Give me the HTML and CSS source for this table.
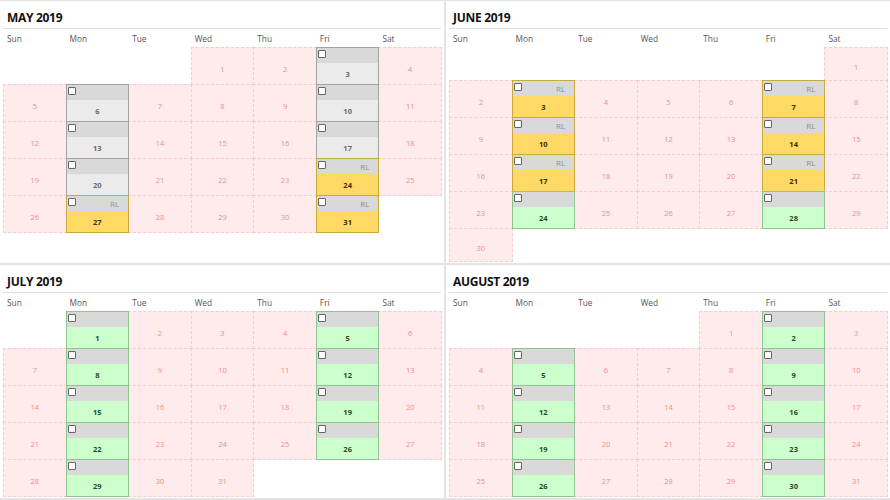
FILE: index.html
```html
<!DOCTYPE html>
<html>
<head>
<meta charset="utf-8">
<link rel="stylesheet" href="styles.css">
</head>
<body>
<div class="board">

<section class="month">
<h2 class="title">MAY 2019</h2>
<div class="days"><span>Sun</span><span>Mon</span><span>Tue</span><span>Wed</span><span>Thu</span><span>Fri</span><span>Sat</span></div>
<div class="grid">
<div class="e"></div><div class="e"></div><div class="e"></div><div class="p">1</div><div class="p">2</div>
<div class="c g"><div class="bar"><i class="cb"></i></div><div class="num">3</div></div><div class="p">4</div>
<div class="p">5</div><div class="c g"><div class="bar"><i class="cb"></i></div><div class="num">6</div></div><div class="p">7</div><div class="p">8</div><div class="p">9</div>
<div class="c g"><div class="bar"><i class="cb"></i></div><div class="num">10</div></div><div class="p">11</div>
<div class="p">12</div><div class="c g"><div class="bar"><i class="cb"></i></div><div class="num">13</div></div><div class="p">14</div><div class="p">15</div><div class="p">16</div>
<div class="c g"><div class="bar"><i class="cb"></i></div><div class="num">17</div></div><div class="p">18</div>
<div class="p">19</div><div class="c g"><div class="bar"><i class="cb"></i></div><div class="num">20</div></div><div class="p">21</div><div class="p">22</div><div class="p">23</div>
<div class="c y"><div class="bar"><i class="cb"></i><span class="rl">RL</span></div><div class="num">24</div></div><div class="p">25</div>
<div class="p">26</div><div class="c y"><div class="bar"><i class="cb"></i><span class="rl">RL</span></div><div class="num">27</div></div><div class="p">28</div><div class="p">29</div><div class="p">30</div>
<div class="c y"><div class="bar"><i class="cb"></i><span class="rl">RL</span></div><div class="num">31</div></div><div class="e"></div>
</div>
</section>

<section class="month">
<h2 class="title">JUNE 2019</h2>
<div class="days"><span>Sun</span><span>Mon</span><span>Tue</span><span>Wed</span><span>Thu</span><span>Fri</span><span>Sat</span></div>
<div class="grid">
<div class="e"></div><div class="e"></div><div class="e"></div><div class="e"></div><div class="e"></div><div class="e"></div><div class="p">1</div>
<div class="p">2</div><div class="c y"><div class="bar"><i class="cb"></i><span class="rl">RL</span></div><div class="num">3</div></div><div class="p">4</div><div class="p">5</div><div class="p">6</div>
<div class="c y"><div class="bar"><i class="cb"></i><span class="rl">RL</span></div><div class="num">7</div></div><div class="p">8</div>
<div class="p">9</div><div class="c y"><div class="bar"><i class="cb"></i><span class="rl">RL</span></div><div class="num">10</div></div><div class="p">11</div><div class="p">12</div><div class="p">13</div>
<div class="c y"><div class="bar"><i class="cb"></i><span class="rl">RL</span></div><div class="num">14</div></div><div class="p">15</div>
<div class="p">16</div><div class="c y"><div class="bar"><i class="cb"></i><span class="rl">RL</span></div><div class="num">17</div></div><div class="p">18</div><div class="p">19</div><div class="p">20</div>
<div class="c y"><div class="bar"><i class="cb"></i><span class="rl">RL</span></div><div class="num">21</div></div><div class="p">22</div>
<div class="p">23</div><div class="c n"><div class="bar"><i class="cb"></i></div><div class="num">24</div></div><div class="p">25</div><div class="p">26</div><div class="p">27</div>
<div class="c n"><div class="bar"><i class="cb"></i></div><div class="num">28</div></div><div class="p">29</div>
<div class="p">30</div>
</div>
</section>

<section class="month">
<h2 class="title">JULY 2019</h2>
<div class="days"><span>Sun</span><span>Mon</span><span>Tue</span><span>Wed</span><span>Thu</span><span>Fri</span><span>Sat</span></div>
<div class="grid">
<div class="e"></div><div class="c n"><div class="bar"><i class="cb"></i></div><div class="num">1</div></div><div class="p">2</div><div class="p">3</div><div class="p">4</div>
<div class="c n"><div class="bar"><i class="cb"></i></div><div class="num">5</div></div><div class="p">6</div>
<div class="p">7</div><div class="c n"><div class="bar"><i class="cb"></i></div><div class="num">8</div></div><div class="p">9</div><div class="p">10</div><div class="p">11</div>
<div class="c n"><div class="bar"><i class="cb"></i></div><div class="num">12</div></div><div class="p">13</div>
<div class="p">14</div><div class="c n"><div class="bar"><i class="cb"></i></div><div class="num">15</div></div><div class="p">16</div><div class="p">17</div><div class="p">18</div>
<div class="c n"><div class="bar"><i class="cb"></i></div><div class="num">19</div></div><div class="p">20</div>
<div class="p">21</div><div class="c n"><div class="bar"><i class="cb"></i></div><div class="num">22</div></div><div class="p">23</div><div class="p">24</div><div class="p">25</div>
<div class="c n"><div class="bar"><i class="cb"></i></div><div class="num">26</div></div><div class="p">27</div>
<div class="p">28</div><div class="c n"><div class="bar"><i class="cb"></i></div><div class="num">29</div></div><div class="p">30</div><div class="p">31</div>
</div>
</section>

<section class="month">
<h2 class="title">AUGUST 2019</h2>
<div class="days"><span>Sun</span><span>Mon</span><span>Tue</span><span>Wed</span><span>Thu</span><span>Fri</span><span>Sat</span></div>
<div class="grid">
<div class="e"></div><div class="e"></div><div class="e"></div><div class="e"></div><div class="p">1</div>
<div class="c n"><div class="bar"><i class="cb"></i></div><div class="num">2</div></div><div class="p">3</div>
<div class="p">4</div><div class="c n"><div class="bar"><i class="cb"></i></div><div class="num">5</div></div><div class="p">6</div><div class="p">7</div><div class="p">8</div>
<div class="c n"><div class="bar"><i class="cb"></i></div><div class="num">9</div></div><div class="p">10</div>
<div class="p">11</div><div class="c n"><div class="bar"><i class="cb"></i></div><div class="num">12</div></div><div class="p">13</div><div class="p">14</div><div class="p">15</div>
<div class="c n"><div class="bar"><i class="cb"></i></div><div class="num">16</div></div><div class="p">17</div>
<div class="p">18</div><div class="c n"><div class="bar"><i class="cb"></i></div><div class="num">19</div></div><div class="p">20</div><div class="p">21</div><div class="p">22</div>
<div class="c n"><div class="bar"><i class="cb"></i></div><div class="num">23</div></div><div class="p">24</div>
<div class="p">25</div><div class="c n"><div class="bar"><i class="cb"></i></div><div class="num">26</div></div><div class="p">27</div><div class="p">28</div><div class="p">29</div>
<div class="c n"><div class="bar"><i class="cb"></i></div><div class="num">30</div></div><div class="p">31</div>
</div>
</section>

</div>
</body>
</html>
```
FILE: styles.css
```css
* { box-sizing: border-box; }
html, body { margin: 0; }
body {
  background: #e4e4e4;
  font-family: "Open Sans", "DejaVu Sans", sans-serif;
  width: 890px;
}
.board {
  display: grid;
  grid-template-columns: 444px 444px;
  column-gap: 2px;
  row-gap: 2px;
  padding-top: 1px;
}
.month {
  background: #fff;
  padding: 0 3px 2px;
}
.title {
  margin: 0;
  padding: 10px 4px 3px;
  font-size: 12px;
  line-height: 14px;
  font-weight: 700;
  letter-spacing: -0.3px;
  color: #111;
  border-bottom: 1px solid #dedede;
}
.days {
  display: grid;
  grid-template-columns: repeat(7, 1fr);
  height: 18px;
  padding-top: 2px;
  font-size: 8.3px;
  line-height: 16px;
  color: #555;
}
.days span { padding-left: 4px; }
.grid {
  display: grid;
  grid-template-columns: repeat(7, 1fr);
  grid-auto-rows: minmax(33px, auto);
}
.p, .c { margin: 0 -1px -1px 0; }
.p {
  background: #ffebeb;
  border: 1px dashed #f4cdcd;
  min-height: 34px;
  display: flex;
  align-items: center;
  justify-content: center;
  padding-top: 6px;
  font-size: 7.5px;
  color: #ef8c8c;
}
.c {
  position: relative;
  display: flex;
  flex-direction: column;
  border: 1px solid #a3a3a3;
}
.c.y { border-color: #c8a93e; }
.c.n { border-color: #8fc38f; }
.bar {
  height: 15px;
  flex: none;
  background: #d9d9d9;
  display: flex;
  align-items: flex-start;
  justify-content: space-between;
}
.cb {
  width: 8px;
  height: 8px;
  border: 1px solid #666;
  background: #fff;
  margin: 2px 0 0 1px;
  border-radius: 1px;
}
.rl {
  font-size: 8px;
  line-height: 15px;
  color: #8f8f8f;
  padding-right: 9px;
}
.num {
  flex: 1;
  min-height: 21px;
  display: flex;
  align-items: center;
  justify-content: center;
  font-weight: 700;
  font-size: 7.5px;
}
.g .num { background: #ebebeb; color: #6b6b6b; }
.y .num { background: #ffd966; color: #3b3000; }
.n .num { background: #ccffcc; color: #1e4d1e; }
```
